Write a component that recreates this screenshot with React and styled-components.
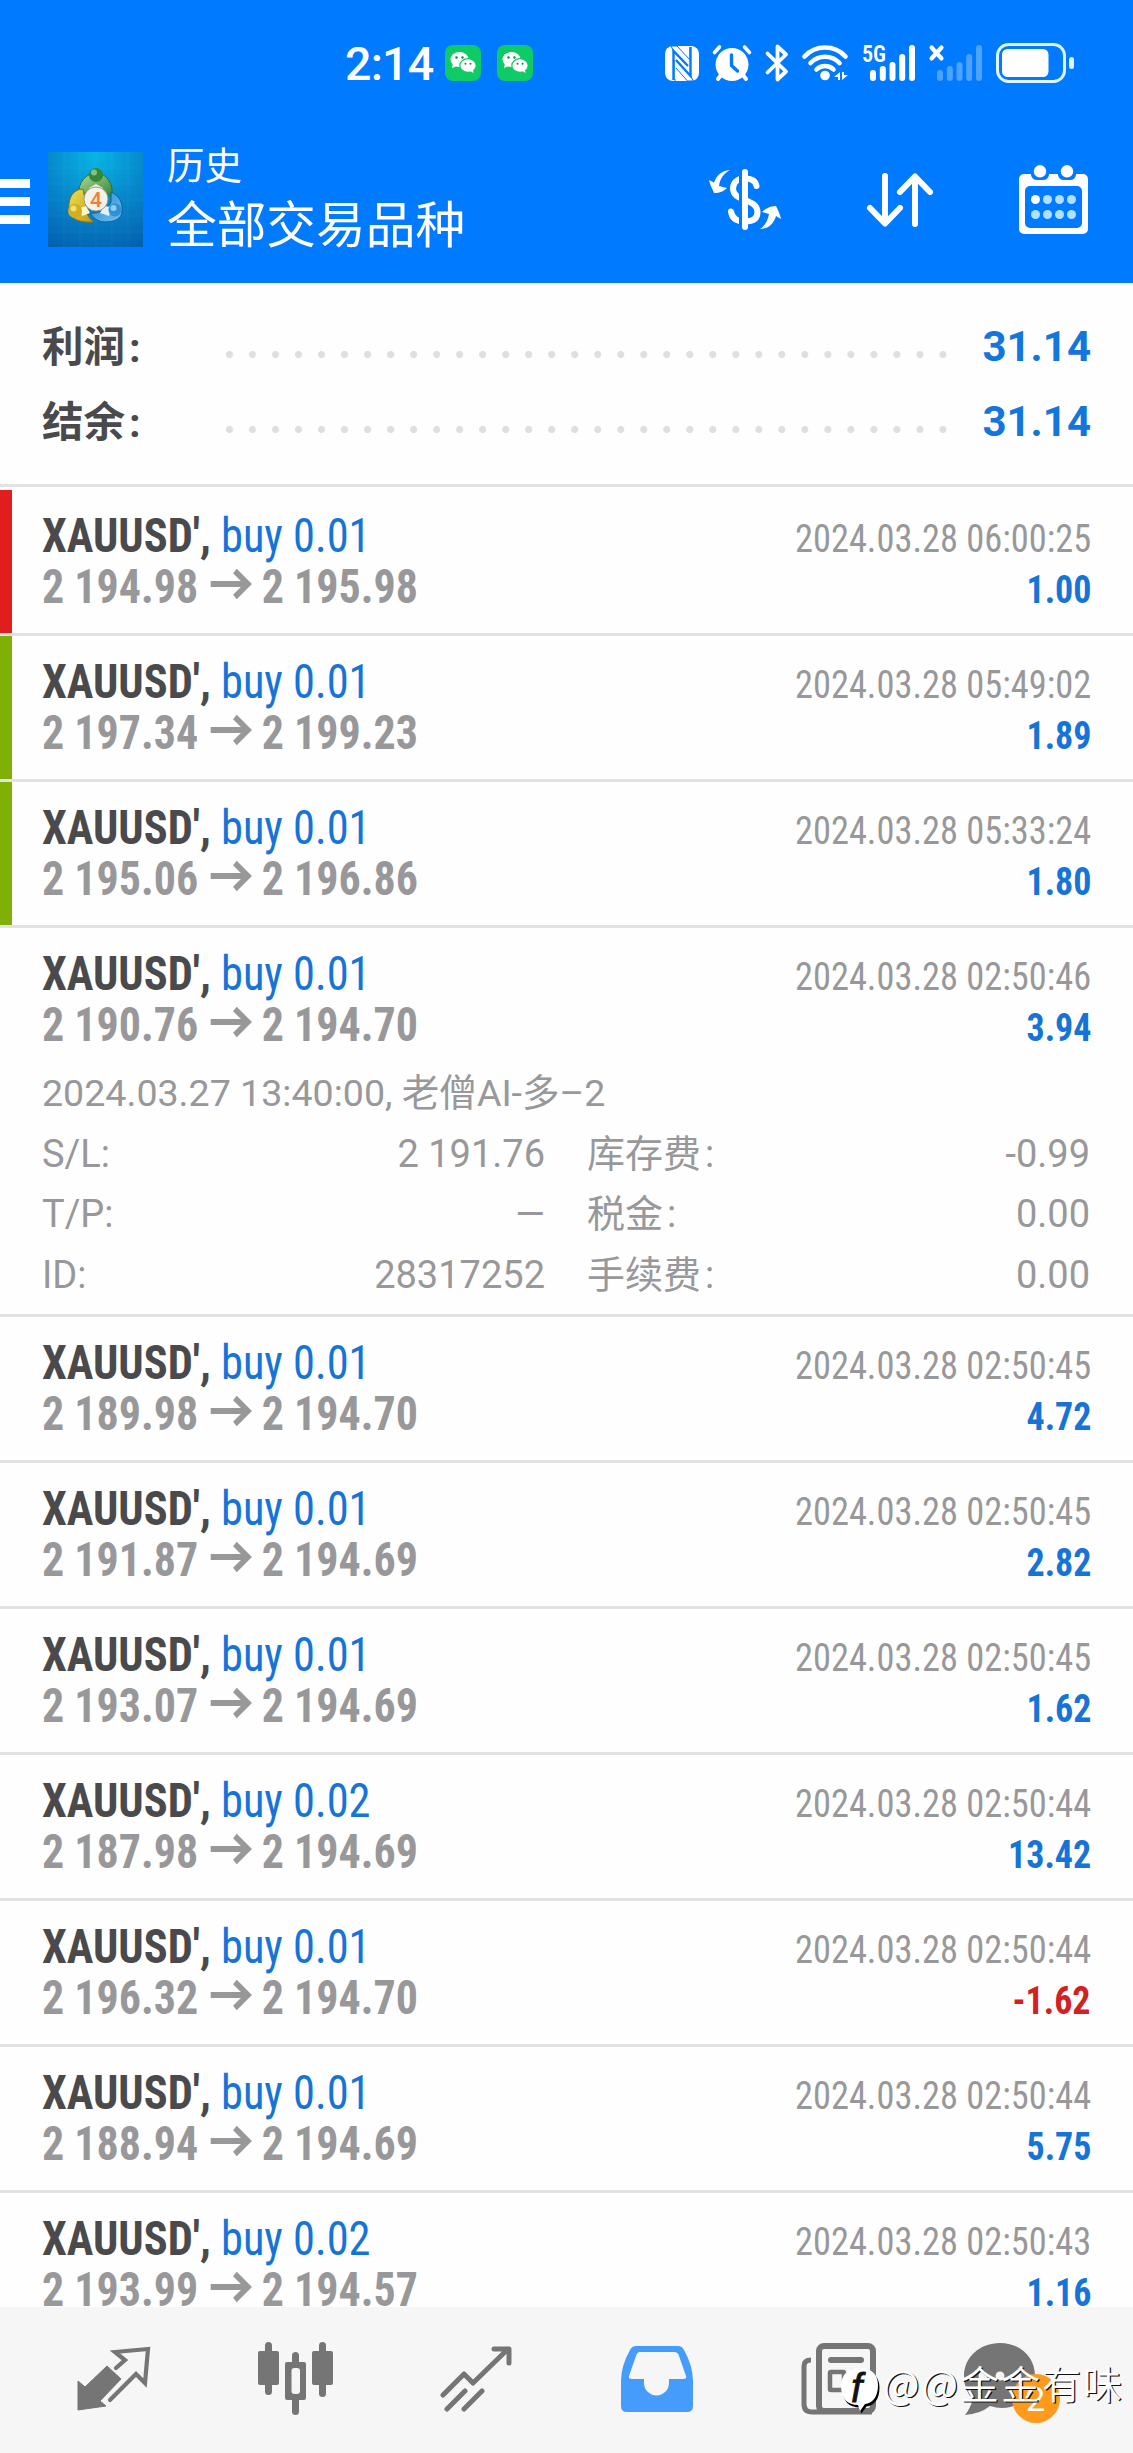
import React from "react";
import styled, { createGlobalStyle } from "styled-components";

const Global = createGlobalStyle`
  * { box-sizing: border-box; }
  body {
    margin: 0;
    background: #fff;
    font-family: Roboto, "Noto Sans CJK SC", sans-serif;
    -webkit-font-smoothing: antialiased;
  }
  svg { display: block; flex: none; overflow: visible; }
`;

const Screen = styled.div`
  position: relative;
  display: flex;
  flex-direction: column;
  width: 1133px;
  height: 2453px;
  overflow: hidden;
  background: #fefefe;
`;

/* ---------- status bar ---------- */

const StatusBar = styled.div`
  display: flex;
  align-items: center;
  height: 126px;
  padding: 0 59px 0 345px;
  background: #007aff;
  color: #fff;
`;

const Clock = styled.span`
  width: 100px;
  padding-top: 2px;
  font-size: 46.5px;
  font-weight: 500;
  line-height: 60px;
  letter-spacing: -0.8px;
`;

const ChatApps = styled.div`
  display: flex;
  gap: 16px;
  flex: 1;
`;

const Indicators = styled.div`
  display: flex;
  align-items: center;
`;

const Slot = styled.div`
  display: flex;
  margin-left: ${(p) => p.$gap || 0}px;
`;

const WeChat = () => (
  <svg width="36" height="36" viewBox="0 0 36 36">
    <rect width="36" height="36" rx="8" fill="#0fcb66" />
    <ellipse cx="14.500" cy="14.500" rx="9" ry="7.400" fill="#fff" />
    <path d="M8 18l-1 5 5-2z" fill="#fff" />
    <ellipse cx="23" cy="20.500" rx="8.200" ry="6.800" fill="#fff" stroke="#0fcb66" strokeWidth="1.200" />
    <path d="M25 26l3.500 2-.5-4z" fill="#fff" />
    <circle cx="11.500" cy="12.500" r="1.200" fill="#0a8a45" />
    <circle cx="17.500" cy="12.500" r="1.200" fill="#0a8a45" />
    <circle cx="20.500" cy="18.800" r="1" fill="#0a8a45" />
    <circle cx="25.500" cy="18.800" r="1" fill="#0a8a45" />
  </svg>
);

const Nfc = () => (
  <svg width="34" height="35" viewBox="0 0 34 35">
    <rect width="34" height="35" rx="8" fill="#fff" />
    <path d="M8.500 34V5L23 20M25.500 1v29L11 14" fill="none" stroke="#007aff" strokeWidth="2.400" />
    <path d="M8.500 5L6 0h6l13 14V1M9 14v20h2M25.500 30l3 5h-6L11 22" fill="none" stroke="#007aff" strokeWidth="1" />
  </svg>
);

const Alarm = () => (
  <svg width="38" height="37" viewBox="0 0 38 37">
    <circle cx="19" cy="19.500" r="16.500" fill="#fff" />
    <path d="M1.500 7.500L6.500 2M36.500 7.500L31.500 2" stroke="#fff" strokeWidth="3.600" strokeLinecap="round" />
    <path d="M8 30l-3 4M30 30l3 4" stroke="#fff" strokeWidth="4" strokeLinecap="round" />
    <path d="M18.500 10v10.500l6 5.500" fill="none" stroke="#007aff" strokeWidth="3.400" strokeLinecap="round" strokeLinejoin="round" />
  </svg>
);

const Bluetooth = () => (
  <svg width="24" height="38" viewBox="0 0 24 38">
    <path d="M2.500 9.500L21 27.500 12.500 35.500V2.500L21 10.500 2.500 28.500" fill="none" stroke="#fff" strokeWidth="3.800" strokeLinecap="round" strokeLinejoin="round" />
  </svg>
);

const Wifi = () => (
  <svg width="47" height="38" viewBox="0 0 47 38">
    <g fill="none" stroke="#fff" strokeWidth="4.600" strokeLinecap="round">
      <path d="M2.500 12.500a28 28 0 0 1 41 0" />
      <path d="M8.500 19a20 20 0 0 1 29 0" />
      <path d="M14.500 25.500a12 12 0 0 1 17 0" />
    </g>
    <circle cx="23" cy="31.500" r="4.800" fill="#fff" />
    <path d="M32 33l6-5v8h-2v-3zM46 31l-6 5v-8h2v3z" fill="#fff" />
  </svg>
);

const SignalText = styled.text`
  font-family: Roboto, sans-serif;
  font-size: 23.5px;
  font-weight: 600;
  font-stretch: 75%;
`;

const Signal = ({ label, off }) => (
  <svg width="54" height="38" viewBox="0 0 54 38">
    {off ? (
      <path d="M2.500 3.500l10 11M12.500 3.500l-10 11" stroke="#fff" strokeWidth="4.200" strokeLinecap="round" />
    ) : (
      <SignalText x="0" y="18" fill="#fff" textLength="24" lengthAdjust="spacingAndGlyphs">{label}</SignalText>
    )}
    <g fill="#fff" opacity={off ? 0.3 : 1}>
      <rect x="8" y="26" width="6" height="11" rx="3" />
      <rect x="17.800" y="22" width="6" height="15" rx="3" />
      <rect x="27.500" y="18" width="6" height="19" rx="3" />
      <rect x="37.200" y="10" width="6" height="27" rx="3" />
      <rect x="47" y="1" width="6" height="36" rx="3" />
    </g>
  </svg>
);

const Battery = () => (
  <svg width="78" height="40" viewBox="0 0 78 40">
    <rect x="1.500" y="1.500" width="67" height="37" rx="11" fill="none" stroke="#dff4ff" strokeWidth="3" />
    <rect x="6" y="6" width="46.500" height="28" rx="5.500" fill="#fff" />
    <rect x="73" y="14" width="5" height="12" rx="2.500" fill="#dff4ff" />
  </svg>
);

/* ---------- app bar ---------- */

const AppBar = styled.header`
  display: flex;
  align-items: center;
  height: 157px;
  padding: 0 45px 10px 0;
  background: #007aff;
  color: #fff;
`;

const MenuButton = styled.div`
  display: flex;
  flex-direction: column;
  gap: 9px;
  width: 48px;
  padding-top: 3px;
`;

const MenuBar = styled.span`
  width: 30px;
  height: 9px;
  background: #fff;
`;

const Titles = styled.div`
  display: flex;
  flex-direction: column;
  flex: 1;
  padding: 4px 0 0 24px;
`;

const Subtitle = styled.span`
  font-size: 37.5px;
  line-height: 50px;
`;

const Title = styled.span`
  font-size: 49.7px;
  line-height: 71px;
`;

const Actions = styled.div`
  display: flex;
  align-items: center;
  gap: 86px;
`;

const LogoDigit = styled.text`
  font-family: Roboto, sans-serif;
  font-size: 21px;
  font-weight: 500;
`;

const Logo = () => (
  <svg width="95" height="95" viewBox="0 0 95 95">
    <defs>
      <radialGradient id="lbg" cx="50%" cy="5%" r="105%">
        <stop offset="0" stopColor="#08b4e4" />
        <stop offset="0.500" stopColor="#0687cb" />
        <stop offset="1" stopColor="#0460b0" />
      </radialGradient>
      <linearGradient id="lg" x1="0" y1="0" x2="1" y2="1">
        <stop offset="0" stopColor="#b4dc98" />
        <stop offset="1" stopColor="#2f8535" />
      </linearGradient>
      <linearGradient id="ly" x1="0" y1="0" x2="1" y2="1">
        <stop offset="0" stopColor="#efe04e" />
        <stop offset="1" stopColor="#c09a18" />
      </linearGradient>
      <linearGradient id="lb" x1="0" y1="0" x2="1" y2="1">
        <stop offset="0" stopColor="#2b86cf" />
        <stop offset="1" stopColor="#6cc0f2" />
      </linearGradient>
    </defs>
    <rect width="95" height="95" fill="url(#lbg)" />
    <path d="M16 0v95M32 0v95M48 0v95M64 0v95M80 0v95M0 16h95M0 32h95M0 48h95M0 64h95M0 80h95" stroke="#fff" strokeOpacity="0.050" />
    <path d="M31 44c-2-14 8-23 17-23s18 9 16 24c-4-3-8-5-16-5s-13 1-17 4z" fill="url(#lg)" stroke="#2c6e35" />
    <path d="M35 37c-9 0-15 8-14 20 0 9 9 14 25 13-6-4-9-11-8-18z" fill="url(#ly)" stroke="#80701c" />
    <path d="M63 40c8 3 12 11 11 19 0 8-8 11-17 11-7 0-12-4-15-9 8 1 18-3 21-11z" fill="url(#lb)" stroke="#185c98" />
    <path d="M41 36l7-4 7 4-3 5H44z" fill="#e6f3d8" />
    <path d="M32 56l6-2 4 7-8 3z" fill="#fff8c8" />
    <path d="M63 55l-7-1-4 7 9 3z" fill="#dff3ff" />
    <circle cx="48" cy="23" r="7" fill="#35873a" />
    <circle cx="46" cy="20.500" r="3" fill="#9fd08a" fillOpacity="0.800" />
    <circle cx="27" cy="59" r="7" fill="#d3ae20" />
    <circle cx="25.500" cy="56.500" r="3" fill="#f7ec8c" fillOpacity="0.800" />
    <circle cx="67" cy="58" r="6.500" fill="#3390d4" />
    <circle cx="65.500" cy="56" r="3" fill="#a0dcff" fillOpacity="0.800" />
    <circle cx="48" cy="47" r="12" fill="#f4f1ea" stroke="#8a8a70" strokeWidth="0.800" />
    <LogoDigit x="48" y="54.500" textAnchor="middle" fill="#f08030">4</LogoDigit>
  </svg>
);

const DollarSwap = () => (
  <svg width="72" height="61" viewBox="0 0 72 61">
    <path d="M47.500 17c-1-6-6-7.500-11.500-7.500-8 0-12 4-12 10 0 7 6 9 12 11.500s12.500 5 12.500 12-5 9.500-12.500 9.500-13-3-14-10" fill="none" stroke="#fff" strokeWidth="6" strokeLinecap="round" />
    <rect x="30" y="0" width="4" height="61" fill="#007aff" />
    <rect x="33" y="0" width="6" height="61" rx="3" fill="#fff" />
    <path d="M21 1C14 5 11 10 10 17l8 2C15 22 11 24 5 24 3 19 1 16 0 11l5 2.500C8 6 12 2 21 1z" fill="#fff" />
    <path d="M51 60c5-3 8-9 9-15l-7-2c3-3 8-6 14-6 2 4 4 8 5 13l-5-3c-2 7-7 13-16 13z" fill="#fff" />
  </svg>
);

const SortArrows = () => (
  <svg width="66" height="54" viewBox="0 0 66 54">
    <path d="M18 3v47M3 35l15 15.500L33 35M48 51V4M33 19L48 3.500 63 19" fill="none" stroke="#fff" strokeWidth="6" strokeLinecap="round" strokeLinejoin="round" />
  </svg>
);

const Calendar = () => (
  <svg width="69" height="70" viewBox="0 0 69 70">
    <path fillRule="evenodd" d="M5 9h59a5 5 0 0 1 5 5v50a5 5 0 0 1-5 5H5a5 5 0 0 1-5-5V14a5 5 0 0 1 5-5zM11 21a5 5 0 0 0-5 5v32a5 5 0 0 0 5 5h47a5 5 0 0 0 5-5V26a5 5 0 0 0-5-5z" fill="#fff" />
    {[21, 48].map((x) => (
      <React.Fragment key={x}>
        <path d={`M${x - 9} 6v4q1 5 6 5h6q5 0 6-5V6z`} fill="#007aff" />
        <circle cx={x} cy="6.300" r="6.200" fill="#fff" />
      </React.Fragment>
    ))}
    {[34.5, 49.5].map((y) =>
      [16.5, 28.5, 40.5, 52.5].map((x, i) => (
        <circle key={`${x}${y}`} cx={x} cy={y} r="4.500" fill={i === 0 && y < 40 ? "#fff" : "#b4e0ff"} />
      ))
    )}
  </svg>
);

/* ---------- content ---------- */

const Content = styled.main`
  flex: 1;
  min-height: 0;
  overflow: hidden;
`;

const Summary = styled.section`
  display: flex;
  flex-direction: column;
  height: 204px;
  padding: 26px 42px 0;
  margin-bottom: 3px;
  border-bottom: 3px solid #e2e2e4;
`;

const SummaryRow = styled.div`
  display: flex;
  align-items: center;
  height: 75px;
`;

const SummaryLabel = styled.span`
  width: 184px;
  padding-bottom: 5px;
  color: #4a4a4c;
  font-size: 41.5px;
  font-weight: 700;
`;

const Colon = styled.span`
  margin-left: ${(p) => p.$gap}px;
`;

const Leader = styled.div`
  width: 736px;
  height: 7px;
  margin-top: 16px;
  background: radial-gradient(circle at 3.5px 3.5px, #dfdfe1 3.2px, transparent 3.9px) 0 0 / 23.03px 7px repeat-x;
`;

const SummaryValue = styled.span`
  flex: 1;
  color: #1375de;
  font-size: 42px;
  font-weight: 700;
  text-align: right;
  white-space: nowrap;
`;

const Deal = styled.article`
  height: ${(p) => (p.$open ? 389 : 146)}px;
  padding: 21px 42px 0;
  border-bottom: 3px solid #e2e2e4;
  box-shadow: ${(p) => (p.$mark ? `inset 12px 0 0 ${p.$mark}` : "none")};
`;

const Line = styled.div`
  display: flex;
  align-items: baseline;
  justify-content: space-between;
  height: ${(p) => p.$h || 50}px;
  line-height: 50px;
  font-stretch: 75%;
  font-family: "Roboto Condensed", Roboto, sans-serif;
  white-space: nowrap;
`;

const Symbol = styled.span`
  color: #4a4a4c;
  font-size: 47.2px;
  font-weight: 700;
  transform: scaleX(0.941);
  transform-origin: left;
`;

const Side = styled.span`
  color: #1673d8;
  font-weight: 400;
`;

const Prices = styled.span`
  display: flex;
  align-items: baseline;
  color: #98989a;
  font-size: 47.2px;
  font-weight: 700;
  transform: scaleX(0.932);
  transform-origin: left;
`;

const ArrowBox = styled.span`
  display: inline-flex;
  margin: 0 13px;
`;

const Time = styled.span`
  color: #98989a;
  font-size: 39px;
  transform: scaleX(0.934);
  transform-origin: right;
`;

const Profit = styled.span`
  color: ${(p) => (p.$loss ? "#d32020" : "#1673d8")};
  font-size: 39px;
  font-weight: 700;
  transform: scaleX(0.922);
  transform-origin: right;
`;

const Details = styled.div`
  display: flex;
  flex-direction: column;
  padding-top: 13px;
  color: #98989a;
  font-size: 38px;
  font-weight: 400;
  line-height: 60.5px;
`;

const Comment = styled.div`
  font-size: 37.6px;
  white-space: nowrap;
`;

const Fields = styled.div`
  display: grid;
  grid-template-columns: 503px 503px;
  column-gap: 42px;
`;

const Field = styled.div`
  display: flex;
  justify-content: space-between;
  height: 60.5px;
`;

const ArrowRight = () => (
  <svg width="42" height="30" viewBox="0 0 42 30">
    <path d="M0 11h40M26 -2L40 11 26 24" fill="none" stroke="#98989a" strokeWidth="5.800" />
  </svg>
);

const RED = "#e01e1e";
const GREEN = "#7fb005";

const deals = [
  { lot: "0.01", from: "2 194.98", to: "2 195.98", time: "06:00:25", profit: "1.00", mark: RED },
  { lot: "0.01", from: "2 197.34", to: "2 199.23", time: "05:49:02", profit: "1.89", mark: GREEN },
  { lot: "0.01", from: "2 195.06", to: "2 196.86", time: "05:33:24", profit: "1.80", mark: GREEN },
  {
    lot: "0.01", from: "2 190.76", to: "2 194.70", time: "02:50:46", profit: "3.94",
    comment: "2024.03.27 13:40:00, 老僧AI-多–2",
    fields: [["S/L", "2 191.76"], ["库存费", "-0.99"], ["T/P", "—"], ["税金", "0.00"], ["ID", "28317252"], ["手续费", "0.00"]],
  },
  { lot: "0.01", from: "2 189.98", to: "2 194.70", time: "02:50:45", profit: "4.72" },
  { lot: "0.01", from: "2 191.87", to: "2 194.69", time: "02:50:45", profit: "2.82" },
  { lot: "0.01", from: "2 193.07", to: "2 194.69", time: "02:50:45", profit: "1.62" },
  { lot: "0.02", from: "2 187.98", to: "2 194.69", time: "02:50:44", profit: "13.42" },
  { lot: "0.01", from: "2 196.32", to: "2 194.70", time: "02:50:44", profit: "-1.62" },
  { lot: "0.01", from: "2 188.94", to: "2 194.69", time: "02:50:44", profit: "5.75" },
  { lot: "0.02", from: "2 193.99", to: "2 194.57", time: "02:50:43", profit: "1.16" },
];

const DealItem = ({ deal }) => (
  <Deal $mark={deal.mark} $open={!!deal.fields}>
    <Line $h={51}>
      <Symbol>XAUUSD', <Side>buy {deal.lot}</Side></Symbol>
      <Time>2024.03.28 {deal.time}</Time>
    </Line>
    <Line>
      <Prices>
        {deal.from}
        <ArrowBox><ArrowRight /></ArrowBox>
        {deal.to}
      </Prices>
      <Profit $loss={deal.profit.startsWith("-")}>{deal.profit}</Profit>
    </Line>
    {deal.fields && (
      <Details>
        <Comment>{deal.comment}</Comment>
        <Fields>
          {deal.fields.map(([k, v], i) => (
            <Field key={k}><span>{k}<Colon $gap={i % 2 ? 4 : 0}>:</Colon></span><span>{v}</span></Field>
          ))}
        </Fields>
      </Details>
    )}
  </Deal>
);

/* ---------- bottom navigation ---------- */

const Nav = styled.nav`
  display: flex;
  align-items: flex-start;
  gap: 106px;
  height: 146px;
  padding: 35px 0 0 76.5px;
  background: #f6f6f7;
`;

const NavItem = styled.div`
  position: relative;
  display: flex;
  flex: none;
  align-items: center;
  justify-content: center;
  width: 75px;
  height: 73px;
  margin-left: ${(p) => p.$shift || 0}px;
`;

const Badge = styled.span`
  position: absolute;
  left: 49px;
  top: 32px;
  width: 48px;
  height: 49px;
  border-radius: 50%;
  background: #ff9a1c;
  color: #fff;
  font-size: 34px;
  line-height: 51px;
  text-align: center;
`;

const G = "#757575";

const QuotesIcon = () => (
  <svg width="72" height="64" viewBox="0 0 72 64">
    <path d="M0 63V34l7 6 22-21 14 13-21 22 6 5z" fill={G} stroke={G} strokeLinejoin="round" />
    <path d="M38 21l9-8-10-8 33-3-3 34-9-9-26 26" fill="none" stroke={G} strokeWidth="4.200" strokeLinecap="round" />
  </svg>
);

const CandlesIcon = () => (
  <svg width="75" height="73" viewBox="0 0 75 73">
    <g fill={G}>
      <rect x="0" y="9" width="21" height="34" rx="2" />
      <rect x="7" y="0" width="7" height="53" rx="3.500" />
      <rect x="54" y="9" width="21" height="34" rx="2" />
      <rect x="61" y="0" width="7" height="55" rx="3.500" />
      <rect x="27" y="20" width="21" height="38" rx="2" />
      <rect x="34" y="10" width="7" height="63" rx="3.500" />
    </g>
    <rect x="33.500" y="26" width="8.500" height="26" rx="3" fill="#f6f6f7" />
  </svg>
);

const TradeIcon = () => (
  <svg width="72" height="66" viewBox="0 0 72 66">
    <path d="M3 49L24 28 33 37 68 3M54 3h15v14M7 63L25 45M24 63L42 45" fill="none" stroke={G} strokeWidth="5" strokeLinecap="round" strokeLinejoin="round" />
  </svg>
);

const HistoryIcon = () => (
  <svg width="72" height="66" viewBox="0 0 72 66">
    <path d="M15 0h42q4 0 6 4 9 16 9 31v25q0 6-6 6H6q-6 0-6-6V35Q0 20 9 4q2-4 6-4z" fill="#469cfb" />
    <path d="M19 6h34q4 0 5 4l7 20q1 3-3 3H48v4a12.500 12.500 0 0 1-25 0v-4H11q-4 0-3-3l7-20q1-4 4-4z" fill="#f6f6f7" />
  </svg>
);

const NewsIcon = () => (
  <svg width="75" height="72" viewBox="0 0 75 72">
    <rect x="18" y="3" width="54" height="65" rx="5" fill="none" stroke={G} strokeWidth="6" />
    <path d="M10 17q-7 0-7 6v38q0 8 8 8h60" fill="none" stroke={G} strokeWidth="5" />
    <path d="M18 20v44" stroke={G} strokeWidth="4" />
    <rect x="27" y="14" width="36" height="6" rx="3" fill={G} />
    <rect x="29" y="29" width="14" height="18" rx="1" fill="none" stroke={G} strokeWidth="4.500" />
    <path d="M50 29h12M50 38h12M50 47h12" stroke={G} strokeWidth="4.500" />
  </svg>
);

const ChatIcon = () => (
  <svg width="72" height="72" viewBox="0 0 72 72">
    <path d="M36 0C56 0 71 14 71 33S56 65 38 65q-6 0-12-2-10 8-25 9 5-6 8-16Q0 48 0 33C0 14 16 0 36 0z" fill={G} />
    <circle cx="19" cy="33" r="4.500" fill="#f6f6f7" />
    <circle cx="36" cy="33" r="4.500" fill="#f6f6f7" />
    <circle cx="53" cy="33" r="4.500" fill="#f6f6f7" />
  </svg>
);

/* ---------- overlay signature ---------- */

const Signature = styled.div`
  position: absolute;
  left: 840px;
  top: 2363px;
  display: flex;
  align-items: center;
  height: 56px;
  color: #fff;
  font-family: "Noto Sans CJK SC", sans-serif;
  font-size: 39px;
  font-weight: 350;
  line-height: 56px;
  white-space: nowrap;
  text-shadow: 1.3px 1.3px 0.5px #111;
`;

const SignatureName = styled.span`
  margin-left: 3px;
  padding-bottom: 18px;
  letter-spacing: 2px;
`;

const SignatureInitial = styled.text`
  font-family: "Liberation Sans", sans-serif;
  font-size: 40px;
  font-style: italic;
  text-shadow: none;
`;

const SignatureMark = () => (
  <svg width="40" height="50" viewBox="0 0 40 50">
    <path d="M20 3c11 0 18 6 18 17 0 13-6 18-13 19l-5 7-2-6C8 40 1 34 1 21 1 9 9 3 20 3z" fill="#000" transform="translate(1.500 1.500)" />
    <path d="M20 2c11 0 18 6 18 17 0 13-6 18-13 19l-5 7-2-6C8 39 1 33 1 20 1 8 9 2 20 2z" fill="#fff" />
    <SignatureInitial x="11" y="36" fill="#111" stroke="#111" strokeWidth="0.800">f</SignatureInitial>
  </svg>
);

export default function App() {
  return (
    <Screen>
      <Global />
      <StatusBar>
        <Clock>2:14</Clock>
        <ChatApps><WeChat /><WeChat /></ChatApps>
        <Indicators>
          <Slot><Nfc /></Slot>
          <Slot $gap={14}><Alarm /></Slot>
          <Slot $gap={14}><Bluetooth /></Slot>
          <Slot $gap={13}><Wifi /></Slot>
          <Slot $gap={13}><Signal label="5G" /></Slot>
          <Slot $gap={13}><Signal off /></Slot>
          <Slot $gap={13}><Battery /></Slot>
        </Indicators>
      </StatusBar>
      <AppBar>
        <MenuButton><MenuBar /><MenuBar /><MenuBar /></MenuButton>
        <Logo />
        <Titles>
          <Subtitle>历史</Subtitle>
          <Title>全部交易品种</Title>
        </Titles>
        <Actions><DollarSwap /><SortArrows /><Calendar /></Actions>
      </AppBar>
      <Content>
        <Summary>
          <SummaryRow><SummaryLabel>利润<Colon $gap={4}>:</Colon></SummaryLabel><Leader /><SummaryValue>31.14</SummaryValue></SummaryRow>
          <SummaryRow><SummaryLabel>结余<Colon $gap={4}>:</Colon></SummaryLabel><Leader /><SummaryValue>31.14</SummaryValue></SummaryRow>
        </Summary>
        {deals.map((d, i) => <DealItem key={i} deal={d} />)}
      </Content>
      <Nav>
        <NavItem><QuotesIcon /></NavItem>
        <NavItem><CandlesIcon /></NavItem>
        <NavItem><TradeIcon /></NavItem>
        <NavItem><HistoryIcon /></NavItem>
        <NavItem><NewsIcon /></NavItem>
        <NavItem $shift={-19}><ChatIcon /><Badge>2</Badge></NavItem>
      </Nav>
      <Signature>
        <SignatureMark />
        <SignatureName>@@金金有味</SignatureName>
      </Signature>
    </Screen>
  );
}
